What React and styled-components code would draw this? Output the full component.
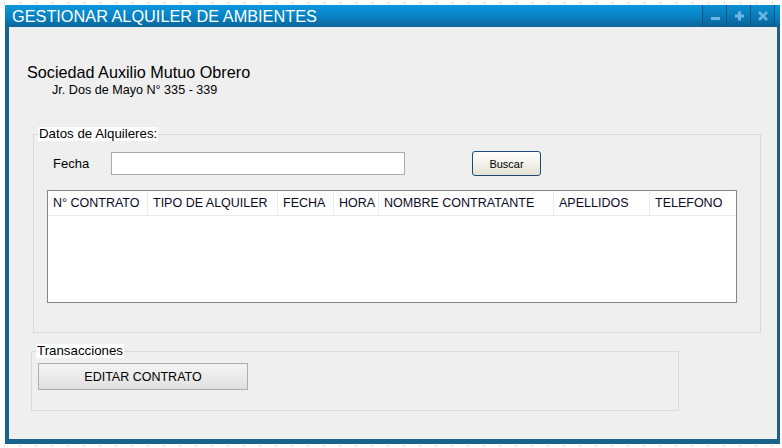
import React from 'react';
import styled, { createGlobalStyle } from 'styled-components';

const GlobalStyle = createGlobalStyle`
  html, body {
    margin: 0;
    padding: 0;
  }
  body {
    min-height: 448px;
    background-color: #fff;
    background-image:
      repeating-linear-gradient(90deg, #d4d4d4 0 1px, transparent 1px 16px),
      repeating-linear-gradient(90deg, #d4d4d4 0 1px, transparent 1px 16px);
    background-size: 100% 2px, 100% 2px;
    background-position: 4px 2px, 4px 445px;
    background-repeat: no-repeat;
    font-family: "Liberation Sans", Arial, sans-serif;
    padding: 5px 0 0 5px;
    box-sizing: border-box;
  }
`;

const Window = styled.div`
  width: 775px;
  height: 439px;
  display: flex;
  flex-direction: column;
`;

const TitleBar = styled.div`
  height: 22px;
  flex: none;
  display: flex;
  align-items: stretch;
  justify-content: space-between;
  background: linear-gradient(to bottom, #0a98de 0%, #0881c2 55%, #0b6597 100%);
`;

const Title = styled.div`
  color: #fff;
  font-size: 16.3px;
  line-height: 22px;
  padding-left: 7px;
`;

const Controls = styled.div`
  display: flex;
  margin-right: 5px;
  border-right: 1px solid #0b5680;
`;

const ControlButton = styled.div`
  width: 23px;
  display: flex;
  align-items: center;
  justify-content: center;
  border-left: 1px solid #0b5680;
  background: linear-gradient(to bottom, #0a8fd2 0%, #0a79b6 55%, #0c6192 100%);
`;

const Body = styled.div`
  flex: 1;
  background: #efefef;
  border-style: solid;
  border-color: #17638b;
  border-width: 0 3px 5px 4px;
  display: flex;
  flex-direction: column;
  align-items: flex-start;
  padding-top: 36px;
`;

const Company = styled.div`
  margin-left: 18px;
  font-size: 16.2px;
  line-height: 18px;
  color: #000;
`;

const Address = styled.div`
  margin-left: 43px;
  margin-top: 2px;
  font-size: 12.6px;
  line-height: 14px;
  color: #000;
`;

const Group = styled.fieldset`
  margin: ${(p) => p.$top}px 0 0 ${(p) => p.$left}px;
  padding: 0 0 ${(p) => p.$bottom}px 0;
  width: ${(p) => p.$width}px;
  box-sizing: border-box;
  border: 1px solid #dadada;
  min-width: 0;
`;

const Legend = styled.legend`
  margin-left: 4px;
  padding: 0 1px;
  background: #fff;
  font-size: 13.3px;
  line-height: 14px;
  color: #000;
`;

const SearchRow = styled.div`
  display: flex;
  align-items: center;
  margin: 10px 0 0 19px;
`;

const Label = styled.span`
  width: 58px;
  font-size: 13px;
  color: #000;
`;

const TextInput = styled.div`
  width: 294px;
  height: 23px;
  box-sizing: border-box;
  background: #fff;
  border: 1px solid #ababab;
`;

const SearchButton = styled.div`
  width: 69px;
  height: 25px;
  box-sizing: border-box;
  margin-left: 67px;
  border: 1px solid #1f4a78;
  border-radius: 3px;
  background: linear-gradient(to bottom, #fdfdfb 0%, #f3f2ec 50%, #e3e0d4 100%);
  display: flex;
  align-items: center;
  justify-content: center;
  font-size: 11px;
  color: #000;
`;

const Table = styled.div`
  margin: 14px 0 29px 13px;
  width: 690px;
  height: 113px;
  box-sizing: border-box;
  border: 1px solid #828790;
  background: #fff;
`;

const HeaderRow = styled.div`
  display: grid;
  grid-template-columns: 100px 130px 56px 45px 175px 96px 86px;
  height: 25px;
  box-sizing: border-box;
  border-bottom: 1px solid #e4ecf6;
`;

const HeaderCell = styled.div`
  padding-left: 5px;
  border-right: 1px solid #e4ecf6;
  font-size: 12.5px;
  line-height: 24px;
  color: #0a0a28;
  white-space: nowrap;
  overflow: hidden;
  &:last-child {
    border-right: none;
  }
`;

const ActionButton = styled.div`
  margin: 5px 0 0 6px;
  width: 210px;
  height: 27px;
  box-sizing: border-box;
  border: 1px solid #adadad;
  background: linear-gradient(to bottom, #f3f3f3 0%, #ebebeb 50%, #dfdfdf 100%);
  display: flex;
  align-items: center;
  justify-content: center;
  font-size: 12.5px;
  color: #000;
`;

const columns = [
  'N° CONTRATO',
  'TIPO DE ALQUILER',
  'FECHA',
  'HORA',
  'NOMBRE CONTRATANTE',
  'APELLIDOS',
  'TELEFONO',
];

const iconColor = '#6cb6e4';

function WindowControls() {
  return (
    <Controls>
      <ControlButton>
        <svg width="12" height="12" viewBox="0 0 12 12">
          <rect x="2" y="7" width="9" height="3" fill={iconColor} />
        </svg>
      </ControlButton>
      <ControlButton>
        <svg width="12" height="12" viewBox="0 0 12 12">
          <rect x="2" y="4.5" width="9" height="3" fill={iconColor} />
          <rect x="5" y="1.5" width="3" height="9" fill={iconColor} />
        </svg>
      </ControlButton>
      <ControlButton>
        <svg width="12" height="12" viewBox="0 0 12 12">
          <path d="M2 2 L10 10 M10 2 L2 10" stroke={iconColor} strokeWidth="2.6" />
        </svg>
      </ControlButton>
    </Controls>
  );
}

export default function App() {
  return (
    <>
      <GlobalStyle />
      <Window>
        <TitleBar>
          <Title>GESTIONAR ALQUILER DE AMBIENTES</Title>
          <WindowControls />
        </TitleBar>
        <Body>
          <Company>Sociedad Auxilio Mutuo Obrero</Company>
          <Address>Jr. Dos de Mayo N° 335 - 339</Address>

          <Group $top={30} $left={24} $width={728} $bottom={0}>
            <Legend>Datos de Alquileres:</Legend>
            <SearchRow>
              <Label>Fecha</Label>
              <TextInput />
              <SearchButton>Buscar</SearchButton>
            </SearchRow>
            <Table>
              <HeaderRow>
                {columns.map((c) => (
                  <HeaderCell key={c}>{c}</HeaderCell>
                ))}
              </HeaderRow>
            </Table>
          </Group>

          <Group $top={11} $left={22} $width={648} $bottom={20}>
            <Legend>Transacciones</Legend>
            <ActionButton>EDITAR CONTRATO</ActionButton>
          </Group>
        </Body>
      </Window>
    </>
  );
}
